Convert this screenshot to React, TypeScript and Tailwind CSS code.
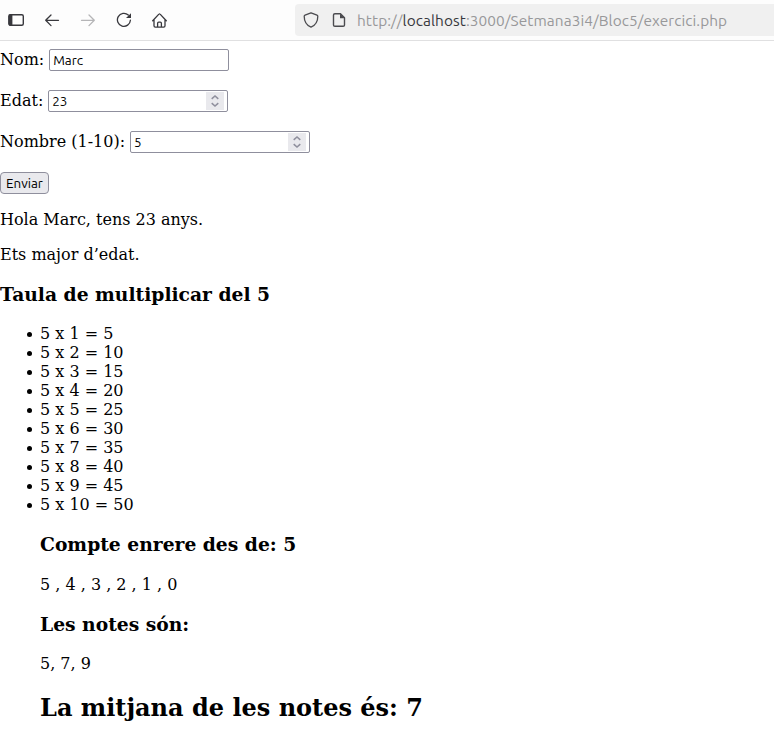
import React from 'react';

const rows = [1, 2, 3, 4, 5, 6, 7, 8, 9, 10];

function Toolbar() {
  return (
    <header className="flex h-[41px] items-start border-b border-[#e0e0e1] bg-[#fdfdfd]">
      <div className="flex h-10 w-[295px] shrink-0 items-center gap-5 pl-2 text-[#38383d]">
        <svg className="size-4" viewBox="0 0 16 16" fill="none" stroke="currentColor" strokeWidth="1.4">
          <rect x="0.8" y="2.7" width="14.5" height="10.6" rx="1.5" />
          <path d="M1 2.5h3.4v11H1z" fill="currentColor" stroke="none" />
        </svg>
        <svg className="size-4" viewBox="0 0 16 16" fill="none" stroke="currentColor" strokeWidth="1.3" strokeLinecap="round" strokeLinejoin="round">
          <path d="M14.5 8.3H1.7M7 3 1.7 8.3 7 13.6" />
        </svg>
        <svg className="size-4 text-[#b5b5b7]" viewBox="0 0 16 16" fill="none" stroke="currentColor" strokeWidth="1.3" strokeLinecap="round" strokeLinejoin="round">
          <path d="M1.5 8.3h12.8M9 3 14.3 8.3 9 13.6" />
        </svg>
        <svg className="size-4" viewBox="0 0 16 16" fill="none" stroke="currentColor" strokeWidth="1.3" strokeLinecap="round">
          <path d="M12.3 3A6.5 6.5 0 1 0 14.4 8.2" />
          <path d="M15 1.2v4.9h-5z" fill="currentColor" stroke="none" />
        </svg>
        <svg className="size-4" viewBox="0 0 16 16" fill="none" stroke="currentColor" strokeWidth="1.3" strokeLinecap="round" strokeLinejoin="round">
          <path d="M.7 8.7 6.9 2.1a.8.8 0 0 1 1.2 0l6.2 6.6M2 7.6v6.2c0 .8.5 1.3 1.3 1.3h8.4c.8 0 1.3-.5 1.3-1.3V7.6M5.6 14.9v-3.7c0-.7.4-1.1 1.1-1.1h1.6c.7 0 1.1.4 1.1 1.1v3.7" />
        </svg>
      </div>
      <div className="mt-1 flex h-8 min-w-0 flex-1 items-center rounded-l bg-[#f0f0f0] pl-2 text-[#4b4b4f]">
        <svg className="size-4 shrink-0" viewBox="0 0 16 16" fill="none" stroke="currentColor" strokeWidth="1.3" strokeLinejoin="round">
          <path d="M8 .8 14 3.2c.5.2.8.6.8 1.1C14.8 10 12.3 13.4 8 15.2 3.7 13.4 1.2 10 1.2 4.3c0-.5.3-.9.8-1.1z" />
        </svg>
        <svg className="ml-3 size-4 shrink-0" viewBox="0 0 16 16" fill="none" stroke="currentColor" strokeWidth="1.4" strokeLinejoin="round">
          <path d="M3.9 1.7h5.6l4 4v7.2c0 .8-.5 1.4-1.4 1.4H3.9c-.9 0-1.4-.6-1.4-1.4V3.1c0-.9.5-1.4 1.4-1.4z" />
          <path d="M9 1.5v4.8h5z" fill="currentColor" stroke="none" />
        </svg>
        <span className="ml-[10px] pt-px whitespace-nowrap font-['Ubuntu','Noto_Sans',sans-serif] text-[15.4px] leading-5 tracking-[0.08px] text-[#98989a]">
          http://<span className="text-[#38383d]">localhost</span>:3000/Setmana3i4/Bloc5/exercici.php
        </span>
      </div>
    </header>
  );
}

function Field({ label, value, stepper = false }: { label: string; value: string; stepper?: boolean }) {
  return (
    <label className="flex h-[22px] items-start">
      <span className="mr-[5px] whitespace-nowrap leading-[21px]">{label}</span>
      <span className="flex h-[22px] w-[180px] items-center justify-between rounded-[2px] border border-[#8f8f9d] bg-white pr-[3px] pl-[3px] font-['Ubuntu','Noto_Sans',sans-serif] text-[13.4px] leading-4">
        <span className="pt-0.5">{value}</span>
        {stepper && (
          <span className="flex h-[18px] w-[18px] items-center justify-center bg-[#e9e9ed] text-[#8f8f9d]">
            <svg className="h-[14px] w-[10px]" viewBox="0 0 10 14" fill="none" stroke="currentColor" strokeWidth="1.5">
              <path d="m1.7 4.9 3.3-3 3.3 3M1.7 9.1l3.3 3 3.3-3" />
            </svg>
          </span>
        )}
      </span>
    </label>
  );
}

export default function App() {
  return (
    <div className="h-[748px] w-[774px] overflow-hidden bg-white font-['DejaVu_Serif',serif] text-[16px] leading-[19px] text-black">
      <Toolbar />
      <main className="pt-2">
        <form className="flex flex-col items-start gap-[19px]">
          <Field label="Nom:" value="Marc" />
          <Field label="Edat:" value="23" stepper />
          <Field label="Nombre (1-10):" value="5" stepper />
          <button type="button" className="h-[22px] w-[49px] rounded-[4px] border border-[#8f8f9d] bg-[#e9e9ed] pt-px font-['Ubuntu','Noto_Sans',sans-serif] text-[13.4px] leading-5">
            Enviar
          </button>
        </form>
        <p className="mt-4">Hola Marc, tens 23 anys.</p>
        <p className="mt-4">Ets major d’edat.</p>
        <h3 className="mt-[19px] text-[18.72px] leading-[22px] font-bold">Taula de multiplicar del 5</h3>
        <ul className="mt-[19px] pl-[27px]">
          {rows.map((n) => (
            <li key={n} className="flex items-center before:mt-0.5 before:mr-2 before:size-[5px] before:rounded-full before:bg-black before:content-['']">
              5 x {n} = {5 * n}
            </li>
          ))}
        </ul>
        <section className="pl-10">
          <h3 className="mt-[19px] text-[18.72px] leading-[22px] font-bold">Compte enrere des de: 5</h3>
          <p className="mt-5">5 , 4 , 3 , 2 , 1 , 0</p>
          <h3 className="mt-[19px] text-[18.72px] leading-[22px] font-bold">Les notes són:</h3>
          <p className="mt-[19px]">5, 7, 9</p>
          <h2 className="mt-[21px] text-[24px] leading-7 font-bold">La mitjana de les notes és: 7</h2>
        </section>
      </main>
    </div>
  );
}
